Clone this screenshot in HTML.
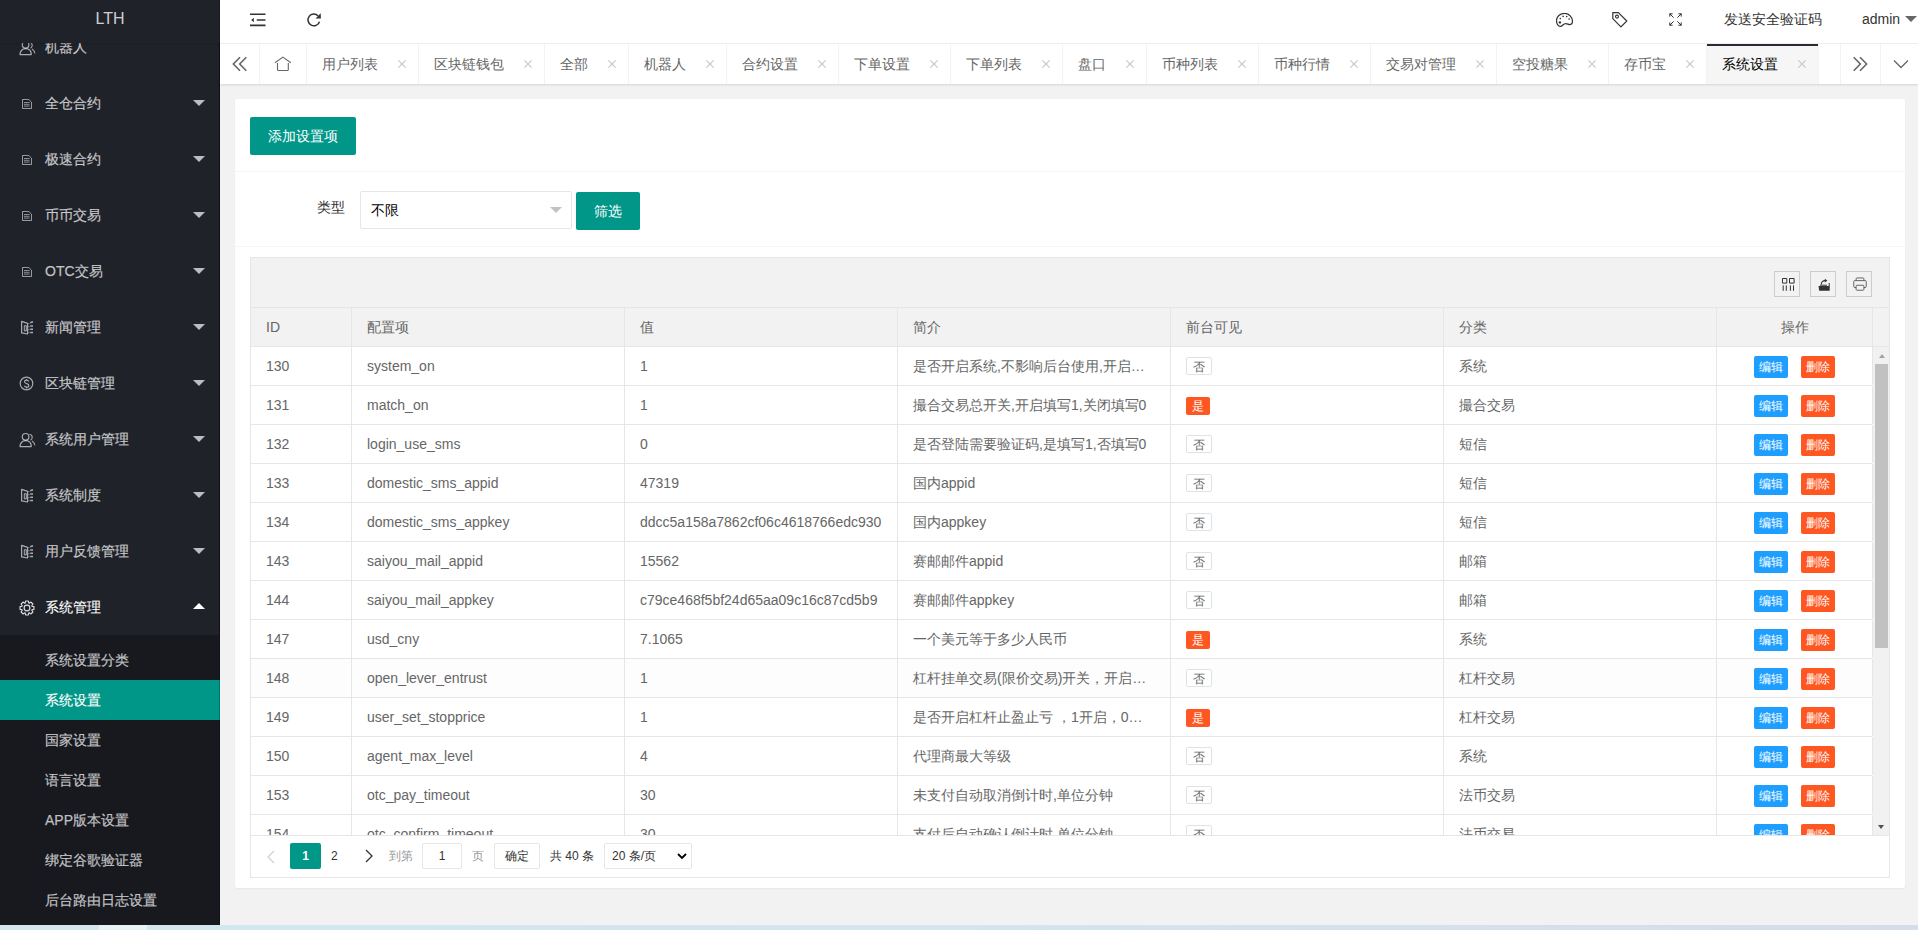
<!DOCTYPE html>
<html><head><meta charset="utf-8">
<style>
*{margin:0;padding:0;box-sizing:border-box}
html,body{width:1918px;height:930px;overflow:hidden}
body{position:relative;background:#f2f2f2;font-family:"Liberation Sans",sans-serif;font-size:14px;color:#666}
.abs{position:absolute}
#side{position:absolute;left:0;top:0;width:220px;height:925px;background:#20222a;overflow:hidden;box-shadow:inset -1px 0 0 rgba(0,0,0,.35)}
#logo{position:absolute;left:0;top:0;width:220px;height:43px;background:#20222a;box-shadow:0 1px 2px rgba(0,0,0,.15);z-index:5;color:rgba(255,255,255,.8);font-size:16px;line-height:38px;text-align:center}
.nav{position:absolute;left:0;width:220px;height:56px;line-height:56px;color:rgba(255,255,255,.7)}
.nav.on{color:#fff}
.nav .t{position:absolute;left:45px;top:0;-webkit-text-stroke:.25px rgba(255,255,255,.5)}
.nav .ar{position:absolute;left:193px;top:25px;width:0;height:0;border-left:6px solid transparent;border-right:6px solid transparent;border-top:6px solid rgba(255,255,255,.7)}
.nav .ar.up{border-top:0;border-bottom:6px solid #fff;top:24px}
#sub{position:absolute;left:0;top:635px;width:220px;height:290px;background:#18191f}
.dd{position:absolute;left:0;width:220px;height:40px;line-height:40px;color:rgba(255,255,255,.7);padding-left:45px;-webkit-text-stroke:.25px rgba(255,255,255,.5)}
.dd.on{background:#009688;color:#fff}
#hdr{position:absolute;left:220px;top:0;width:1698px;height:44px;background:#fff;border-bottom:1px solid #f0f0f0;color:#333}
#tabs{position:absolute;left:220px;top:44px;width:1698px;height:40px;background:#fff;box-shadow:0 1px 2px rgba(0,0,0,.12);z-index:3}
.tab{position:absolute;top:0;height:40px;line-height:40px;padding-left:15px;color:#666;border-right:1px solid #f3f3f3;white-space:nowrap}
.tab .x{position:absolute;right:12px;top:16px}
.tab.on{background:#f6f6f6;color:#000}
.tab.on:after{content:"";position:absolute;left:0;top:0;width:100%;height:2px;background:#292b34}
.tbtn{position:absolute;top:0;height:40px;width:40px;border-right:1px solid #f3f3f3}
#strip{position:absolute;left:0;top:925px;width:1918px;height:5px;background:linear-gradient(90deg,#d2e7ee,#d3e5ee 50%,#d7dcea)}
#strip i{position:absolute;left:99px;top:0;width:48px;height:5px;background:#e9f2f5}
#card{position:absolute;left:235px;top:99px;width:1670px;height:789px;background:#fff;border-radius:2px;box-shadow:0 1px 2px rgba(0,0,0,.05)}
.sep{position:absolute;left:0;width:1670px;height:1px;background:#f6f6f6}
.btn{position:absolute;height:38px;line-height:38px;background:#009688;color:#fff;text-align:center;border-radius:2px}
#tbl{position:absolute;left:250px;top:257px;width:1640px;height:621px;border:1px solid #e6e6e6;background:#fff}
#tool{position:absolute;left:0;top:0;width:1638px;height:50px;background:#f2f2f2;border-bottom:1px solid #e6e6e6}
.tico{position:absolute;top:13px;width:26px;height:26px;border:1px solid #ccc}
#thead{position:absolute;left:0;top:50px;width:1638px;height:39px;background:#f2f2f2;border-bottom:1px solid #e6e6e6}
.th,.td{position:absolute;top:0;height:38px;line-height:38px;padding:0 15px;white-space:nowrap;overflow:hidden;text-overflow:ellipsis;border-right:1px solid #e6e6e6}
#tbody{position:absolute;left:0;top:89px;width:1638px;height:488px;overflow:hidden}
.tr{position:absolute;left:0;width:1621px;height:39px;border-bottom:1px solid #e6e6e6;background:#fff}
.tr.hv{background:#fdfdfd}
.bdg{display:inline-block;height:18px;line-height:18px;padding:0 6px;font-size:12px;border-radius:2px;vertical-align:middle;position:relative;top:-1px}
.bdg.no{border:1px solid #e2e2e2;color:#666;padding:0 6px;background:#fff}
.bdg.yes{background:#ff5722;color:#fff;top:0}
.xs{display:inline-block;height:22px;line-height:22px;padding:0 5px;font-size:12px;color:#fff;border-radius:2px;vertical-align:middle;position:relative;top:-1px}
#scroll{position:absolute;left:1622px;top:0;width:16px;height:488px;background:#f1f1f1}
#page{position:absolute;left:0;top:577px;width:1638px;height:42px;border-top:1px solid #e6e6e6;font-size:12px;color:#333}
.pg{position:absolute;top:7px;height:26px;line-height:26px}
</style></head><body>
<div id="side">
  <div id="logo">LTH</div>
<div class="nav" style="top:19px"><svg class="abs" style="left:19px;top:21px" width="17" height="16" viewBox="0 0 17 16"><circle cx="6.6" cy="4.8" r="3.3" fill="none" stroke="rgba(255,255,255,.62)" stroke-width="1.2"/><path d="M1 14.6C1 10.9 3.4 8.7 6.6 8.7s5.6 2.2 5.6 5.9z" fill="none" stroke="rgba(255,255,255,.62)" stroke-width="1.2" stroke-linejoin="round"/><path d="M10.6 2.2c1.6.3 2.6 1.5 2.6 3.1 0 1.3-.7 2.4-1.6 2.9M13 8.9c1.5.8 2.6 2.4 2.9 4.4" fill="none" stroke="rgba(255,255,255,.62)" stroke-width="1.1"/></svg><span class="t">机器人</span></div>
<div class="nav" style="top:75px"><svg class="abs" style="left:22px;top:24px" width="10" height="10" viewBox="0 0 10 10"><path d="M.5 .5h6.3l2.7 2.7v6.3H.5z" fill="none" stroke="rgba(255,255,255,.55)" stroke-width="1"/><path d="M2 3.5h5.5M2 5.3h5.5M2 7.1h5.5" stroke="rgba(255,255,255,.55)" stroke-width=".9"/><path d="M2 1.7h3" stroke="rgba(0,0,0,.3)" stroke-width="1"/></svg><span class="t">全仓合约</span><i class="ar"></i></div>
<div class="nav" style="top:131px"><svg class="abs" style="left:22px;top:24px" width="10" height="10" viewBox="0 0 10 10"><path d="M.5 .5h6.3l2.7 2.7v6.3H.5z" fill="none" stroke="rgba(255,255,255,.55)" stroke-width="1"/><path d="M2 3.5h5.5M2 5.3h5.5M2 7.1h5.5" stroke="rgba(255,255,255,.55)" stroke-width=".9"/><path d="M2 1.7h3" stroke="rgba(0,0,0,.3)" stroke-width="1"/></svg><span class="t">极速合约</span><i class="ar"></i></div>
<div class="nav" style="top:187px"><svg class="abs" style="left:22px;top:24px" width="10" height="10" viewBox="0 0 10 10"><path d="M.5 .5h6.3l2.7 2.7v6.3H.5z" fill="none" stroke="rgba(255,255,255,.55)" stroke-width="1"/><path d="M2 3.5h5.5M2 5.3h5.5M2 7.1h5.5" stroke="rgba(255,255,255,.55)" stroke-width=".9"/><path d="M2 1.7h3" stroke="rgba(0,0,0,.3)" stroke-width="1"/></svg><span class="t">币币交易</span><i class="ar"></i></div>
<div class="nav" style="top:243px"><svg class="abs" style="left:22px;top:24px" width="10" height="10" viewBox="0 0 10 10"><path d="M.5 .5h6.3l2.7 2.7v6.3H.5z" fill="none" stroke="rgba(255,255,255,.55)" stroke-width="1"/><path d="M2 3.5h5.5M2 5.3h5.5M2 7.1h5.5" stroke="rgba(255,255,255,.55)" stroke-width=".9"/><path d="M2 1.7h3" stroke="rgba(0,0,0,.3)" stroke-width="1"/></svg><span class="t">OTC交易</span><i class="ar"></i></div>
<div class="nav" style="top:299px"><svg class="abs" style="left:20px;top:21px" width="14" height="15" viewBox="0 0 14 15"><path d="M1.6 1.4L7.6 3.4V14L1.6 12.9Z" fill="none" stroke="rgba(255,255,255,.62)" stroke-width="1.2" stroke-linejoin="round"/><path d="M4.3 5.7h2v5.2h-2z" fill="none" stroke="rgba(255,255,255,.62)" stroke-width="1"/><path d="M10.2 2.8l2.8-1.1M10.2 5.9h2.8M10.2 9.2h2.8M10.2 12.5h2.8" stroke="rgba(255,255,255,.62)" stroke-width="1.5"/><path d="M9 3.2v.9M9 6.2v.9M9 9.2v.9M9 12.2v.9" stroke="rgba(255,255,255,.62)" stroke-width="1"/></svg><span class="t">新闻管理</span><i class="ar"></i></div>
<div class="nav" style="top:355px"><svg class="abs" style="left:19.1px;top:21px" width="15" height="15" viewBox="0 0 15 15"><circle cx="7.5" cy="7.5" r="6.3" fill="none" stroke="rgba(255,255,255,.62)" stroke-width="1.2"/><path d="M9.7 5.5c-.3-.9-1.1-1.4-2.1-1.4-1.2 0-2.1.7-2.1 1.7 0 2.2 4.3 1.4 4.3 3.6 0 1-.9 1.8-2.2 1.8-1 0-1.9-.5-2.2-1.4M7.6 2.9v1.3M7.6 11.2v1.2" fill="none" stroke="rgba(255,255,255,.62)" stroke-width="1.2"/></svg><span class="t">区块链管理</span><i class="ar"></i></div>
<div class="nav" style="top:411px"><svg class="abs" style="left:19px;top:21px" width="17" height="16" viewBox="0 0 17 16"><circle cx="6.6" cy="4.8" r="3.3" fill="none" stroke="rgba(255,255,255,.62)" stroke-width="1.2"/><path d="M1 14.6C1 10.9 3.4 8.7 6.6 8.7s5.6 2.2 5.6 5.9z" fill="none" stroke="rgba(255,255,255,.62)" stroke-width="1.2" stroke-linejoin="round"/><path d="M10.6 2.2c1.6.3 2.6 1.5 2.6 3.1 0 1.3-.7 2.4-1.6 2.9M13 8.9c1.5.8 2.6 2.4 2.9 4.4" fill="none" stroke="rgba(255,255,255,.62)" stroke-width="1.1"/></svg><span class="t">系统用户管理</span><i class="ar"></i></div>
<div class="nav" style="top:467px"><svg class="abs" style="left:20px;top:21px" width="14" height="15" viewBox="0 0 14 15"><path d="M1.6 1.4L7.6 3.4V14L1.6 12.9Z" fill="none" stroke="rgba(255,255,255,.62)" stroke-width="1.2" stroke-linejoin="round"/><path d="M4.3 5.7h2v5.2h-2z" fill="none" stroke="rgba(255,255,255,.62)" stroke-width="1"/><path d="M10.2 2.8l2.8-1.1M10.2 5.9h2.8M10.2 9.2h2.8M10.2 12.5h2.8" stroke="rgba(255,255,255,.62)" stroke-width="1.5"/><path d="M9 3.2v.9M9 6.2v.9M9 9.2v.9M9 12.2v.9" stroke="rgba(255,255,255,.62)" stroke-width="1"/></svg><span class="t">系统制度</span><i class="ar"></i></div>
<div class="nav" style="top:523px"><svg class="abs" style="left:20px;top:21px" width="14" height="15" viewBox="0 0 14 15"><path d="M1.6 1.4L7.6 3.4V14L1.6 12.9Z" fill="none" stroke="rgba(255,255,255,.62)" stroke-width="1.2" stroke-linejoin="round"/><path d="M4.3 5.7h2v5.2h-2z" fill="none" stroke="rgba(255,255,255,.62)" stroke-width="1"/><path d="M10.2 2.8l2.8-1.1M10.2 5.9h2.8M10.2 9.2h2.8M10.2 12.5h2.8" stroke="rgba(255,255,255,.62)" stroke-width="1.5"/><path d="M9 3.2v.9M9 6.2v.9M9 9.2v.9M9 12.2v.9" stroke="rgba(255,255,255,.62)" stroke-width="1"/></svg><span class="t">用户反馈管理</span><i class="ar"></i></div>
<div class="nav on" style="top:579px"><svg class="abs" style="left:19px;top:20.5px" width="16" height="16" viewBox="0 0 16 16"><polygon points="6.19,3.02 6.65,1.03 9.35,1.03 9.81,3.02 10.24,3.20 11.97,2.11 13.89,4.03 12.80,5.76 12.98,6.19 14.97,6.65 14.97,9.35 12.98,9.81 12.80,10.24 13.89,11.97 11.97,13.89 10.24,12.80 9.81,12.98 9.35,14.97 6.65,14.97 6.19,12.98 5.76,12.80 4.03,13.89 2.11,11.97 3.20,10.24 3.02,9.81 1.03,9.35 1.03,6.65 3.02,6.19 3.20,5.76 2.11,4.03 4.03,2.11 5.76,3.20" fill="none" stroke="rgba(255,255,255,.85)" stroke-width="1.15" stroke-linejoin="round"/><circle cx="8" cy="8" r="2.9" fill="none" stroke="rgba(255,255,255,.85)" stroke-width="1.15"/></svg><span class="t">系统管理</span><i class="ar up"></i></div>

  <div id="sub">
<div class="dd" style="top:5px">系统设置分类</div>
<div class="dd on" style="top:45px">系统设置</div>
<div class="dd" style="top:85px">国家设置</div>
<div class="dd" style="top:125px">语言设置</div>
<div class="dd" style="top:165px">APP版本设置</div>
<div class="dd" style="top:205px">绑定谷歌验证器</div>
<div class="dd" style="top:245px">后台路由日志设置</div>

  </div>
</div>
<div id="hdr">
<svg class="abs" style="left:30px;top:12px" width="17" height="16" viewBox="0 0 17 16"><path d="M0 2.2h15.5M6.8 8h8.7M0 13.4h15.5" stroke="#333" stroke-width="1.6"/><path d="M1.2 8l2.6-2.2v4.4z" fill="#333"/></svg><svg class="abs" style="left:86px;top:12px" width="16" height="16" viewBox="0 0 16 16"><path d="M13.5 9.76A5.9 5.9 0 1 1 12.07 3.73" fill="none" stroke="#333" stroke-width="1.5"/><path d="M9.5 6.6H14.9L14.7 1.2z" fill="#333"/></svg><svg class="abs" style="left:1335.5px;top:12.5px" width="17" height="15" viewBox="0.5 0.8 17 15"><path d="M9 1.2C4.6 1.2 1 4.3 1 8.3c0 3 1.6 5.9 3.8 5.9 2.4 0 2.7-2.8 5.3-2.8 1.9 0 2.7 1 4.3 1 1.5 0 2.6-1.1 2.6-3C17 4.9 13.4 1.2 9 1.2z" fill="none" stroke="#333" stroke-width="1.2"/><circle cx="4.4" cy="10.2" r="1.2" fill="#333"/><circle cx="4.8" cy="6.4" r=".8" fill="#333"/><circle cx="7.6" cy="4.2" r=".8" fill="#333"/><circle cx="11.2" cy="4.4" r=".8" fill="#333"/><circle cx="13.6" cy="6.9" r=".8" fill="#333"/></svg><svg class="abs" style="left:1391px;top:11px" width="18" height="18" viewBox="0 0 18 18"><path d="M1.8 1.6h5.6l8.4 8.4-5.9 5.9-8.1-8.2z" fill="none" stroke="#333" stroke-width="1.2" stroke-linejoin="round"/><circle cx="6" cy="5.6" r="1.5" fill="none" stroke="#333" stroke-width="1.1"/></svg><svg class="abs" style="left:1449px;top:13px" width="13" height="13" viewBox="0 0 13 13"><path d="M1 1l3.6 3.6M12 1L8.4 4.6M1 12l3.6-3.6M12 12L8.4 8.4" stroke="#333" stroke-width="1"/><path d="M.6 .8h3M.8 .6v3M12.4 .8h-3M12.2 .6v3M.6 12.2h3M.8 12.4v-3M12.4 12.2h-3M12.2 12.4v-3" stroke="#333" stroke-width="1"/></svg><span class="abs" style="left:1504px;top:0;line-height:38px;color:#333">发送安全验证码</span><span class="abs" style="left:1642px;top:0;line-height:38px;color:#333">admin</span><i class="abs" style="left:1685px;top:16px;width:0;height:0;border-left:6px solid transparent;border-right:6px solid transparent;border-top:6px solid #666"></i>
</div>
<div id="tabs">
<div class="tbtn" style="left:0;width:40px"><svg class="abs" style="left:12px;top:12px" width="16" height="16" viewBox="0 0 16 16"><path d="M8 1.2l-6.6 6.8 6.6 6.8M14.3 1.2l-6.6 6.8 6.6 6.8" fill="none" stroke="#666" stroke-width="1.6"/></svg></div><div class="tbtn" style="left:40px;width:47px"><svg class="abs" style="left:14px;top:12px" width="18" height="16" viewBox="0 0 18 16"><path d="M1 6.7L8.9 1.1l7.9 5.6" fill="none" stroke="#666" stroke-width="1.1"/><path d="M3.5 7.1v6.6q0 .8.8.8h9.2q.8 0 .8-.8V7.1" fill="none" stroke="#666" stroke-width="1.1"/></svg></div><div class="tbtn" style="left:1620px;width:40px;border-right:0;border-left:1px solid #f3f3f3"><svg class="abs" style="left:11.2px;top:12px" width="16" height="16" viewBox="0 0 16 16"><path d="M1.7 1.2l6.6 6.8-6.6 6.8M8 1.2l6.6 6.8-6.6 6.8" fill="none" stroke="#666" stroke-width="1.6"/></svg></div><div class="tbtn" style="left:1660px;width:40px;border-right:0;border-left:1px solid #f3f3f3"><svg class="abs" style="left:11.5px;top:15px" width="16" height="10" viewBox="0 0 16 10"><path d="M1 1.5l7 7 7-7" fill="none" stroke="#666" stroke-width="1.3"/></svg></div><div class="tab" style="left:87px;width:112px">用户列表<svg class="x" width="8" height="8" viewBox="0 0 8 8"><path d="M.4 .4l7.2 7.2M7.6 .4L.4 7.6" stroke="#c8c8c8" stroke-width="1.2"/></svg></div>
<div class="tab" style="left:199px;width:126px">区块链钱包<svg class="x" width="8" height="8" viewBox="0 0 8 8"><path d="M.4 .4l7.2 7.2M7.6 .4L.4 7.6" stroke="#c8c8c8" stroke-width="1.2"/></svg></div>
<div class="tab" style="left:325px;width:84px">全部<svg class="x" width="8" height="8" viewBox="0 0 8 8"><path d="M.4 .4l7.2 7.2M7.6 .4L.4 7.6" stroke="#c8c8c8" stroke-width="1.2"/></svg></div>
<div class="tab" style="left:409px;width:98px">机器人<svg class="x" width="8" height="8" viewBox="0 0 8 8"><path d="M.4 .4l7.2 7.2M7.6 .4L.4 7.6" stroke="#c8c8c8" stroke-width="1.2"/></svg></div>
<div class="tab" style="left:507px;width:112px">合约设置<svg class="x" width="8" height="8" viewBox="0 0 8 8"><path d="M.4 .4l7.2 7.2M7.6 .4L.4 7.6" stroke="#c8c8c8" stroke-width="1.2"/></svg></div>
<div class="tab" style="left:619px;width:112px">下单设置<svg class="x" width="8" height="8" viewBox="0 0 8 8"><path d="M.4 .4l7.2 7.2M7.6 .4L.4 7.6" stroke="#c8c8c8" stroke-width="1.2"/></svg></div>
<div class="tab" style="left:731px;width:112px">下单列表<svg class="x" width="8" height="8" viewBox="0 0 8 8"><path d="M.4 .4l7.2 7.2M7.6 .4L.4 7.6" stroke="#c8c8c8" stroke-width="1.2"/></svg></div>
<div class="tab" style="left:843px;width:84px">盘口<svg class="x" width="8" height="8" viewBox="0 0 8 8"><path d="M.4 .4l7.2 7.2M7.6 .4L.4 7.6" stroke="#c8c8c8" stroke-width="1.2"/></svg></div>
<div class="tab" style="left:927px;width:112px">币种列表<svg class="x" width="8" height="8" viewBox="0 0 8 8"><path d="M.4 .4l7.2 7.2M7.6 .4L.4 7.6" stroke="#c8c8c8" stroke-width="1.2"/></svg></div>
<div class="tab" style="left:1039px;width:112px">币种行情<svg class="x" width="8" height="8" viewBox="0 0 8 8"><path d="M.4 .4l7.2 7.2M7.6 .4L.4 7.6" stroke="#c8c8c8" stroke-width="1.2"/></svg></div>
<div class="tab" style="left:1151px;width:126px">交易对管理<svg class="x" width="8" height="8" viewBox="0 0 8 8"><path d="M.4 .4l7.2 7.2M7.6 .4L.4 7.6" stroke="#c8c8c8" stroke-width="1.2"/></svg></div>
<div class="tab" style="left:1277px;width:112px">空投糖果<svg class="x" width="8" height="8" viewBox="0 0 8 8"><path d="M.4 .4l7.2 7.2M7.6 .4L.4 7.6" stroke="#c8c8c8" stroke-width="1.2"/></svg></div>
<div class="tab" style="left:1389px;width:98px">存币宝<svg class="x" width="8" height="8" viewBox="0 0 8 8"><path d="M.4 .4l7.2 7.2M7.6 .4L.4 7.6" stroke="#c8c8c8" stroke-width="1.2"/></svg></div>
<div class="tab on" style="left:1487px;width:112px">系统设置<svg class="x" width="8" height="8" viewBox="0 0 8 8"><path d="M.4 .4l7.2 7.2M7.6 .4L.4 7.6" stroke="#c8c8c8" stroke-width="1.2"/></svg></div>

</div>
<div id="card">
<div class="btn" style="left:15px;top:18px;width:106px">添加设置项</div><div class="sep" style="top:72px"></div><span class="abs" style="left:82px;top:98px;line-height:20px;color:#333">类型</span><div class="abs" style="left:125px;top:92px;width:212px;height:38px;border:1px solid #e6e6e6;border-radius:2px;background:#fff"><span class="abs" style="left:10px;top:0;line-height:36px;color:#000">不限</span><i class="abs" style="left:189px;top:15px;width:0;height:0;border-left:6px solid transparent;border-right:6px solid transparent;border-top:6px solid #c2c2c2"></i></div><div class="btn" style="left:341px;top:93px;width:64px">筛选</div><div class="sep" style="top:147px"></div>
</div>
<div id="tbl">
<div id="tool"><div class="tico" style="left:1523px"><svg class="abs" style="left:5px;top:5px" width="16" height="16" viewBox="0 0 16 16"><path d="M2.5 1.5h4.3v4.6H2.5zM9.5 1.5h4.6v4.6H9.5z" fill="none" stroke="#333" stroke-width="1"/><path d="M3.2 8.4v5.4M6.3 8.4v5.4M10.4 8.4v5.4M13.5 8.4v5.4" stroke="#333" stroke-width="1"/></svg></div><div class="tico" style="left:1559px"><svg class="abs" style="left:5px;top:5px" width="16" height="16" viewBox="0 0 16 16"><path d="M2.5 9h11.2v4.8H3.2z" fill="#333"/><path d="M13.2 6v3.2M4 8.2h7" fill="none" stroke="#333" stroke-width="1"/><path d="M5.3 7.6c0-2.6 1.5-4 3.8-4" fill="none" stroke="#333" stroke-width="1.1"/><path d="M8.8 1.8l2.6 1.8-2.6 1.9z" fill="#333"/></svg></div><div class="tico" style="left:1595px"><svg class="abs" style="left:4.7px;top:4.4px" width="16" height="16" viewBox="0 0 18 18"><path d="M4.6 5.2V3.2c0-.6.4-1 1-1h6.8c.6 0 1 .4 1 1v2M4.6 13H3c-.6 0-1-.4-1-1V6.2c0-.6.4-1 1-1h12c.6 0 1 .4 1 1V12c0 .6-.4 1-1 1h-1.6M5.6 10.4h6.8c.6 0 1 .4 1 1v3.6c0 .6-.4 1-1 1H5.6c-.6 0-1-.4-1-1v-3.6c0-.6.4-1 1-1z" fill="none" stroke="#555" stroke-width="1"/></svg></div></div><div id="thead"><div class="th" style="left:0px;width:101px;">ID</div><div class="th" style="left:101px;width:273px;">配置项</div><div class="th" style="left:374px;width:273px;">值</div><div class="th" style="left:647px;width:273px;">简介</div><div class="th" style="left:920px;width:273px;">前台可见</div><div class="th" style="left:1193px;width:273px;">分类</div><div class="th" style="left:1466px;width:156px;text-align:center;">操作</div><div class="th" style="left:1622px;width:16px;border:0"></div></div><div id="tbody"><div class="tr" style="top:0px"><div class="td" style="left:0px;width:101px">130</div><div class="td" style="left:101px;width:273px">system_on</div><div class="td" style="left:374px;width:273px">1</div><div class="td" style="left:647px;width:273px">是否开启系统,不影响后台使用,开启…</div><div class="td" style="left:920px;width:273px"><span class="bdg no">否</span></div><div class="td" style="left:1193px;width:273px">系统</div><div class="td" style="left:1466px;width:156px"><span class="xs" style="position:absolute;left:37px;top:9px;background:#1e9fff">编辑</span><span class="xs" style="position:absolute;left:84px;top:9px;background:#ff5722">删除</span></div></div><div class="tr" style="top:39px"><div class="td" style="left:0px;width:101px">131</div><div class="td" style="left:101px;width:273px">match_on</div><div class="td" style="left:374px;width:273px">1</div><div class="td" style="left:647px;width:273px">撮合交易总开关,开启填写1,关闭填写0</div><div class="td" style="left:920px;width:273px"><span class="bdg yes">是</span></div><div class="td" style="left:1193px;width:273px">撮合交易</div><div class="td" style="left:1466px;width:156px"><span class="xs" style="position:absolute;left:37px;top:9px;background:#1e9fff">编辑</span><span class="xs" style="position:absolute;left:84px;top:9px;background:#ff5722">删除</span></div></div><div class="tr" style="top:78px"><div class="td" style="left:0px;width:101px">132</div><div class="td" style="left:101px;width:273px">login_use_sms</div><div class="td" style="left:374px;width:273px">0</div><div class="td" style="left:647px;width:273px">是否登陆需要验证码,是填写1,否填写0</div><div class="td" style="left:920px;width:273px"><span class="bdg no">否</span></div><div class="td" style="left:1193px;width:273px">短信</div><div class="td" style="left:1466px;width:156px"><span class="xs" style="position:absolute;left:37px;top:9px;background:#1e9fff">编辑</span><span class="xs" style="position:absolute;left:84px;top:9px;background:#ff5722">删除</span></div></div><div class="tr" style="top:117px"><div class="td" style="left:0px;width:101px">133</div><div class="td" style="left:101px;width:273px">domestic_sms_appid</div><div class="td" style="left:374px;width:273px">47319</div><div class="td" style="left:647px;width:273px">国内appid</div><div class="td" style="left:920px;width:273px"><span class="bdg no">否</span></div><div class="td" style="left:1193px;width:273px">短信</div><div class="td" style="left:1466px;width:156px"><span class="xs" style="position:absolute;left:37px;top:9px;background:#1e9fff">编辑</span><span class="xs" style="position:absolute;left:84px;top:9px;background:#ff5722">删除</span></div></div><div class="tr" style="top:156px"><div class="td" style="left:0px;width:101px">134</div><div class="td" style="left:101px;width:273px">domestic_sms_appkey</div><div class="td" style="left:374px;width:273px">ddcc5a158a7862cf06c4618766edc930</div><div class="td" style="left:647px;width:273px">国内appkey</div><div class="td" style="left:920px;width:273px"><span class="bdg no">否</span></div><div class="td" style="left:1193px;width:273px">短信</div><div class="td" style="left:1466px;width:156px"><span class="xs" style="position:absolute;left:37px;top:9px;background:#1e9fff">编辑</span><span class="xs" style="position:absolute;left:84px;top:9px;background:#ff5722">删除</span></div></div><div class="tr" style="top:195px"><div class="td" style="left:0px;width:101px">143</div><div class="td" style="left:101px;width:273px">saiyou_mail_appid</div><div class="td" style="left:374px;width:273px">15562</div><div class="td" style="left:647px;width:273px">赛邮邮件appid</div><div class="td" style="left:920px;width:273px"><span class="bdg no">否</span></div><div class="td" style="left:1193px;width:273px">邮箱</div><div class="td" style="left:1466px;width:156px"><span class="xs" style="position:absolute;left:37px;top:9px;background:#1e9fff">编辑</span><span class="xs" style="position:absolute;left:84px;top:9px;background:#ff5722">删除</span></div></div><div class="tr" style="top:234px"><div class="td" style="left:0px;width:101px">144</div><div class="td" style="left:101px;width:273px">saiyou_mail_appkey</div><div class="td" style="left:374px;width:273px">c79ce468f5bf24d65aa09c16c87cd5b9</div><div class="td" style="left:647px;width:273px">赛邮邮件appkey</div><div class="td" style="left:920px;width:273px"><span class="bdg no">否</span></div><div class="td" style="left:1193px;width:273px">邮箱</div><div class="td" style="left:1466px;width:156px"><span class="xs" style="position:absolute;left:37px;top:9px;background:#1e9fff">编辑</span><span class="xs" style="position:absolute;left:84px;top:9px;background:#ff5722">删除</span></div></div><div class="tr" style="top:273px"><div class="td" style="left:0px;width:101px">147</div><div class="td" style="left:101px;width:273px">usd_cny</div><div class="td" style="left:374px;width:273px">7.1065</div><div class="td" style="left:647px;width:273px">一个美元等于多少人民币</div><div class="td" style="left:920px;width:273px"><span class="bdg yes">是</span></div><div class="td" style="left:1193px;width:273px">系统</div><div class="td" style="left:1466px;width:156px"><span class="xs" style="position:absolute;left:37px;top:9px;background:#1e9fff">编辑</span><span class="xs" style="position:absolute;left:84px;top:9px;background:#ff5722">删除</span></div></div><div class="tr hv" style="top:312px"><div class="td" style="left:0px;width:101px">148</div><div class="td" style="left:101px;width:273px">open_lever_entrust</div><div class="td" style="left:374px;width:273px">1</div><div class="td" style="left:647px;width:273px">杠杆挂单交易(限价交易)开关，开启…</div><div class="td" style="left:920px;width:273px"><span class="bdg no">否</span></div><div class="td" style="left:1193px;width:273px">杠杆交易</div><div class="td" style="left:1466px;width:156px"><span class="xs" style="position:absolute;left:37px;top:9px;background:#1e9fff">编辑</span><span class="xs" style="position:absolute;left:84px;top:9px;background:#ff5722">删除</span></div></div><div class="tr" style="top:351px"><div class="td" style="left:0px;width:101px">149</div><div class="td" style="left:101px;width:273px">user_set_stopprice</div><div class="td" style="left:374px;width:273px">1</div><div class="td" style="left:647px;width:273px">是否开启杠杆止盈止亏 ，1开启，0…</div><div class="td" style="left:920px;width:273px"><span class="bdg yes">是</span></div><div class="td" style="left:1193px;width:273px">杠杆交易</div><div class="td" style="left:1466px;width:156px"><span class="xs" style="position:absolute;left:37px;top:9px;background:#1e9fff">编辑</span><span class="xs" style="position:absolute;left:84px;top:9px;background:#ff5722">删除</span></div></div><div class="tr" style="top:390px"><div class="td" style="left:0px;width:101px">150</div><div class="td" style="left:101px;width:273px">agent_max_level</div><div class="td" style="left:374px;width:273px">4</div><div class="td" style="left:647px;width:273px">代理商最大等级</div><div class="td" style="left:920px;width:273px"><span class="bdg no">否</span></div><div class="td" style="left:1193px;width:273px">系统</div><div class="td" style="left:1466px;width:156px"><span class="xs" style="position:absolute;left:37px;top:9px;background:#1e9fff">编辑</span><span class="xs" style="position:absolute;left:84px;top:9px;background:#ff5722">删除</span></div></div><div class="tr" style="top:429px"><div class="td" style="left:0px;width:101px">153</div><div class="td" style="left:101px;width:273px">otc_pay_timeout</div><div class="td" style="left:374px;width:273px">30</div><div class="td" style="left:647px;width:273px">未支付自动取消倒计时,单位分钟</div><div class="td" style="left:920px;width:273px"><span class="bdg no">否</span></div><div class="td" style="left:1193px;width:273px">法币交易</div><div class="td" style="left:1466px;width:156px"><span class="xs" style="position:absolute;left:37px;top:9px;background:#1e9fff">编辑</span><span class="xs" style="position:absolute;left:84px;top:9px;background:#ff5722">删除</span></div></div><div class="tr" style="top:468px"><div class="td" style="left:0px;width:101px">154</div><div class="td" style="left:101px;width:273px">otc_confirm_timeout</div><div class="td" style="left:374px;width:273px">30</div><div class="td" style="left:647px;width:273px">支付后自动确认倒计时,单位分钟</div><div class="td" style="left:920px;width:273px"><span class="bdg no">否</span></div><div class="td" style="left:1193px;width:273px">法币交易</div><div class="td" style="left:1466px;width:156px"><span class="xs" style="position:absolute;left:37px;top:9px;background:#1e9fff">编辑</span><span class="xs" style="position:absolute;left:84px;top:9px;background:#ff5722">删除</span></div></div><div id="scroll"><i class="abs" style="left:5.5px;top:7px;width:0;height:0;border-left:3.5px solid transparent;border-right:3.5px solid transparent;border-bottom:4px solid #a3a3a3"></i><div class="abs" style="left:2px;top:17px;width:13px;height:284px;background:#c1c1c1"></div><i class="abs" style="left:5px;top:478px;width:0;height:0;border-left:3.5px solid transparent;border-right:3.5px solid transparent;border-top:4px solid #505050"></i></div></div><div id="page"><svg class="abs" style="left:15px;top:14px" width="10" height="14" viewBox="0 0 10 14"><path d="M8 1L2 7l6 6" fill="none" stroke="#d2d2d2" stroke-width="1.3"/></svg><div class="pg" style="left:39px;width:31px;background:#009688;color:#fff;text-align:center;border-radius:2px;font-weight:bold">1</div><div class="pg" style="left:80px;width:10px;color:#333">2</div><svg class="abs" style="left:113px;top:13px" width="10" height="14" viewBox="0 0 10 14"><path d="M2 1l6 6-6 6" fill="none" stroke="#333" stroke-width="1.3"/></svg><div class="pg" style="left:138px;color:#999">到第</div><div class="pg" style="left:171px;width:40px;border:1px solid #e6e6e6;text-align:center;line-height:24px;border-radius:2px">1</div><div class="pg" style="left:221px;color:#999">页</div><div class="pg" style="left:243px;width:46px;border:1px solid #e6e6e6;text-align:center;line-height:24px;border-radius:2px;color:#333">确定</div><div class="pg" style="left:299px;color:#333">共 40 条</div><div class="pg" style="left:353px;width:88px;border:1px solid #e6e6e6;border-radius:2px;line-height:24px;padding-left:7px;color:#333">20 条/页<svg class="abs" style="left:72px;top:9px" width="10" height="7" viewBox="0 0 10 7"><path d="M1 1l4 4 4-4" fill="none" stroke="#000" stroke-width="1.8"/></svg></div></div>
</div>
<div class="abs" style="left:219px;top:0;width:1px;height:925px;background:rgba(0,0,0,.22);z-index:10"></div>
<div id="strip"><i></i></div>
</body></html>
